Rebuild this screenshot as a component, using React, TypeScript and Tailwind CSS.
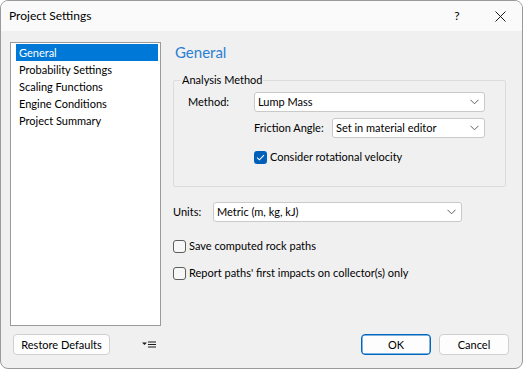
import * as React from "react";

function Chevron() {
  return (
    <svg width="9" height="6" viewBox="0 0 9 6" className="shrink-0">
      <path d="M0.5 0.8 L4.5 4.8 L8.5 0.8" fill="none" stroke="#5f5f5f" strokeWidth="1" />
    </svg>
  );
}

function Combo({ value, width }: { value: string; width: string }) {
  return (
    <div
      className={`${width} h-[20px] flex items-center justify-between bg-white border border-[#c9c9c9] rounded-[3px] pl-[3px] pr-[5px]`}
    >
      <span className="leading-[16px] whitespace-nowrap">{value}</span>
      <Chevron />
    </div>
  );
}

function Check({ checked, label }: { checked?: boolean; label: string }) {
  return (
    <div className="flex items-center h-[14px]">
      {checked ? (
        <div className="w-[13px] h-[13px] rounded-[3px] bg-[#005fb8] flex items-center justify-center">
          <svg width="9" height="7" viewBox="0 0 9 7">
            <path d="M1 3.6 L3.4 5.8 L8 1.2" fill="none" stroke="#ffffff" strokeWidth="1.1" />
          </svg>
        </div>
      ) : (
        <div className="w-[13px] h-[13px] rounded-[3px] border border-[#5d5d5d] bg-[#f7f7f7]" />
      )}
      <span className="ml-[3px] leading-[16px] whitespace-nowrap">{label}</span>
    </div>
  );
}

const pages = [
  "General",
  "Probability Settings",
  "Scaling Functions",
  "Engine Conditions",
  "Project Summary",
];

export default function App() {
  return (
    <div className="w-[523px] h-[369px] bg-[#f0f0f0] border border-[#9a9a9a] rounded-[8px] overflow-hidden flex flex-col text-[11px] leading-[16px] text-black font-['Lato','Noto_Sans',sans-serif]">
      {/* title bar */}
      <div className="h-[30px] shrink-0 bg-[#fafafa] flex items-center pl-[8px]">
        <span className="text-[12px] leading-[16px]">Project Settings</span>
        <div className="ml-auto flex items-center">
          <span className="w-[44px] text-center text-[12px] leading-[16px]">?</span>
          <div className="w-[43px] flex justify-center">
            <svg width="11" height="11" viewBox="0 0 11 11">
              <path d="M0.5 0.5 L10.5 10.5 M10.5 0.5 L0.5 10.5" stroke="#1a1a1a" strokeWidth="1" />
            </svg>
          </div>
        </div>
      </div>

      {/* body */}
      <div className="flex pl-[9px] pt-[11px]">
        <div className="w-[151px] h-[284px] shrink-0 bg-white border border-[#9a9a9a] pt-[1px] pl-[5px] pr-[2px]">
          {pages.map((p, i) => (
            <div
              key={p}
              className={`h-[17px] pl-[3px] leading-[17px] ${i === 0 ? "bg-[#0078d7] text-white" : ""}`}
            >
              {p}
            </div>
          ))}
        </div>

        <div className="ml-[12px] flex flex-col">
          <div className="h-[20px] pl-[2px] text-[15px] leading-[20px] text-[#2a7fd4]">General</div>

          <fieldset className="mt-[10px] w-[333px] border border-[#dcdcdc] rounded-[2px] pl-[7px] pb-[22px]">
            <legend className="px-[1px] leading-[16px]">Analysis Method</legend>
            <div className="pl-[7px] flex flex-col">
              <div className="mt-[4px] flex items-center">
                <span className="w-[66px] shrink-0">Method:</span>
                <Combo value="Lump Mass" width="w-[231px]" />
              </div>
              <div className="mt-[6px] ml-[66px] flex items-center">
                <span className="w-[78px] shrink-0 whitespace-nowrap">Friction Angle:</span>
                <Combo value="Set in material editor" width="w-[153px]" />
              </div>
              <div className="mt-[12px] ml-[66px]">
                <Check checked label="Consider rotational velocity" />
              </div>
            </div>
          </fieldset>

          <div className="mt-[15px] flex items-center">
            <span className="w-[40px] shrink-0">Units:</span>
            <Combo value="Metric (m, kg, kJ)" width="w-[249px]" />
          </div>

          <div className="mt-[17px]">
            <Check label="Save computed rock paths" />
          </div>
          <div className="mt-[13px]">
            <Check label="Report paths' first impacts on collector(s) only" />
          </div>
        </div>
      </div>

      {/* footer */}
      <div className="mt-[8px] flex items-center pl-[12px] pr-[13px]">
        <button className="w-[97px] h-[21px] bg-[#fdfdfd] border border-[#d0d0d0] rounded-[4px] leading-[16px]">
          Restore Defaults
        </button>
        <svg width="15" height="8" viewBox="0 0 15 8" className="ml-[32px]">
          <path d="M0 1.5 L5 1.5 L2.5 4 Z" fill="#1a1a1a" />
          <path d="M6 1 H14 M6 3.5 H14 M6 6 H14" stroke="#1a1a1a" strokeWidth="1" />
        </svg>
        <button className="ml-auto w-[70px] h-[21px] bg-[#fdfdfd] border border-[#0067c0] rounded-[4px] leading-[16px] shadow-[inset_0_0_0_0.5px_#0067c0]">
          OK
        </button>
        <button className="ml-[8px] w-[70px] h-[21px] bg-[#fdfdfd] border border-[#d0d0d0] rounded-[4px] leading-[16px]">
          Cancel
        </button>
      </div>
    </div>
  );
}
